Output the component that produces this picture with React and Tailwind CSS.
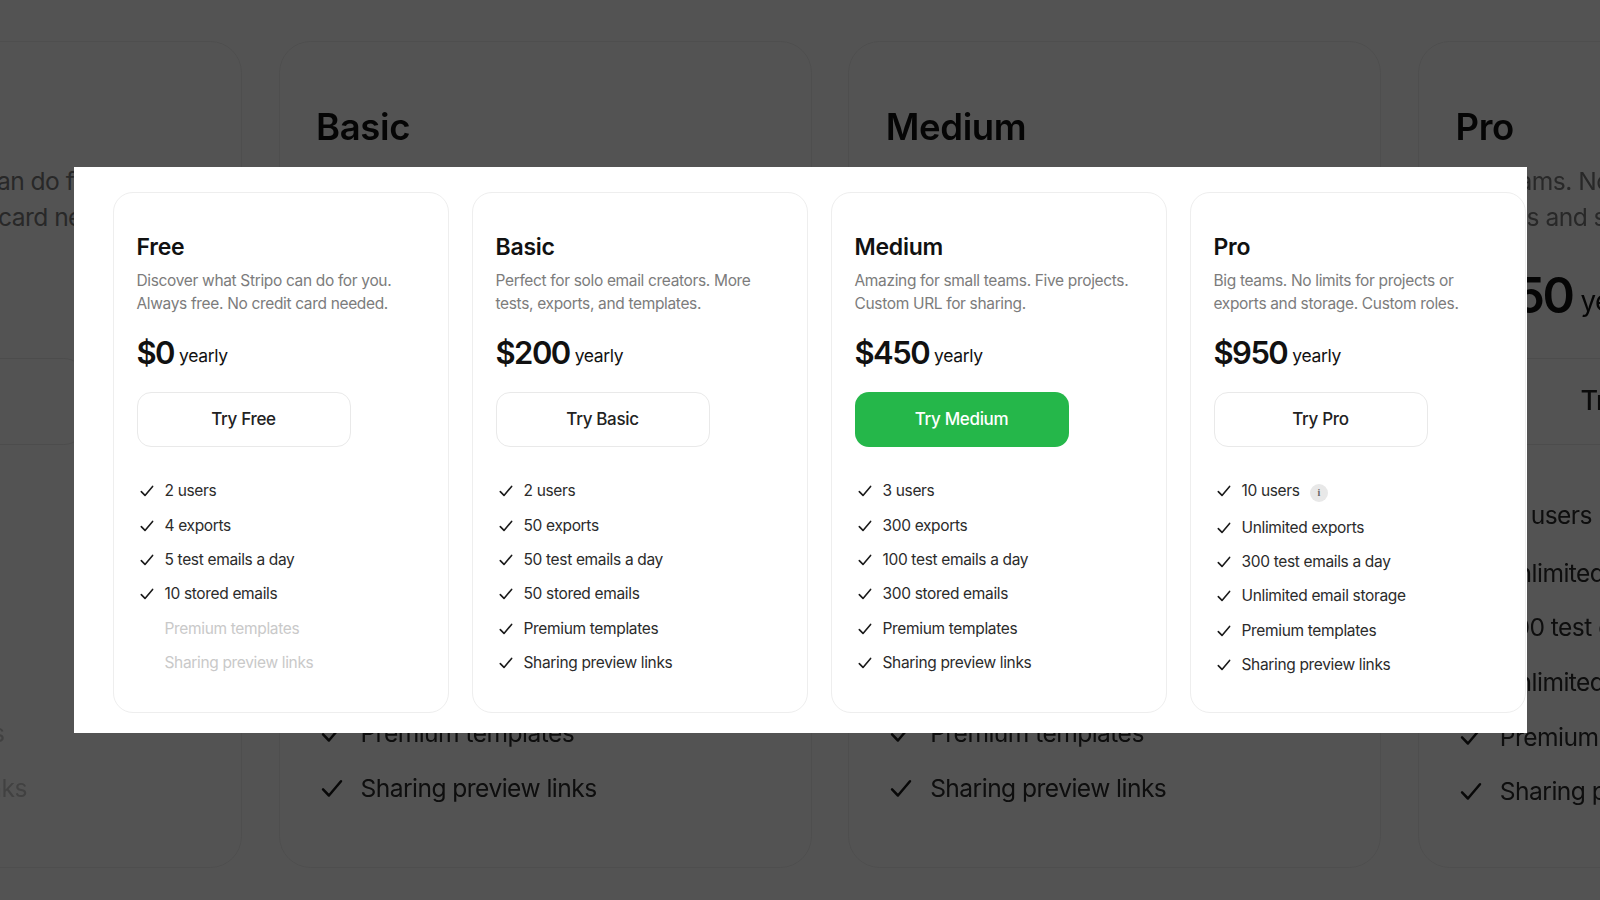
import React from "react";

const plans = [
  {
    name: "Free",
    desc: ["Discover what Stripo can do for you.", "Always free. No credit card needed."],
    price: "$0",
    features: ["2 users", "4 exports", "5 test emails a day", "10 stored emails"],
    off: ["Premium templates", "Sharing preview links"],
  },
  {
    name: "Basic",
    desc: ["Perfect for solo email creators. More", "tests, exports, and templates."],
    price: "$200",
    features: ["2 users", "50 exports", "50 test emails a day", "50 stored emails", "Premium templates", "Sharing preview links"],
  },
  {
    name: "Medium",
    desc: ["Amazing for small teams. Five projects.", "Custom URL for sharing."],
    price: "$450",
    primary: true,
    features: ["3 users", "300 exports", "100 test emails a day", "300 stored emails", "Premium templates", "Sharing preview links"],
  },
  {
    name: "Pro",
    desc: ["Big teams. No limits for projects or", "exports and storage. Custom roles."],
    price: "$950",
    info: true,
    features: ["10 users", "Unlimited exports", "300 test emails a day", "Unlimited email storage", "Premium templates", "Sharing preview links"],
  },
];

function CheckIcon() {
  return (
    <svg viewBox="0 0 14 12" className="w-[14px] h-3 shrink-0 mt-[6px]" fill="none" stroke="#1a1a1a" strokeWidth="1.6" strokeLinecap="round" strokeLinejoin="round">
      <path d="M1.3 6.6 L5 10.4 L12.6 1.4" />
    </svg>
  );
}

function PlanCard({ plan }) {
  return (
    <div className="w-[336px] h-[521px] shrink-0 rounded-[20px] border border-[#eeeeee] bg-white pl-[23px] pt-[39px]">
      <h3 className="text-[23px] leading-[30px] font-semibold tracking-[-0.01em] text-[#111111]">{plan.name}</h3>
      <p className="mt-[7px] text-[15.5px] leading-[23px] tracking-[-0.022em] text-[#7c7c7c]">
        {plan.desc[0]}
        <br />
        {plan.desc[1]}
      </p>
      <div className="mt-[18px] flex items-center gap-[5px] h-10 leading-10 text-[#111111]">
        <span className="text-[31px] font-semibold tracking-[-0.05em]">{plan.price}</span>
        <span className="mt-[6px] text-[17.5px] leading-6 tracking-[-0.02em]">yearly</span>
      </div>
      <button
        className={`mt-[19px] block w-[214px] h-[55px] rounded-[14px] text-[17px] font-medium tracking-[-0.02em] ${
          plan.primary ? "bg-[#25b74a] text-white" : "border border-[#e9e9e9] bg-white text-[#222222]"
        }`}
      >
        Try {plan.name}
      </button>
      <ul className="mt-[27px]">
        {plan.features.map((f, i) => (
          <li key={f} className="flex items-start py-[5.2px] pl-[3px] text-[15.5px] leading-6 tracking-[-0.022em] text-[#2b2b2b]">
            <CheckIcon />
            <span className="ml-[11px]">{f}</span>
            {plan.info && i === 0 && (
              <span className="ml-[10px] mt-[5px] mb-[3px] flex w-[18px] h-[18px] items-center justify-center rounded-full bg-[#e8e8e8] font-['Liberation_Serif',serif] text-[10px] leading-none font-bold text-[#666666]">
                i
              </span>
            )}
          </li>
        ))}
        {plan.off &&
          plan.off.map((f) => (
            <li key={f} className="py-[5.2px] pl-7 text-[15.5px] leading-6 tracking-[-0.022em] text-[#c9c9c9]">
              {f}
            </li>
          ))}
      </ul>
    </div>
  );
}

export default function App() {
  return (
    <div className="relative w-screen h-screen overflow-hidden bg-white font-['Inter',sans-serif]">
      {/* page behind the dialog, same cards but enlarged */}
      <div className="blur-[0.6px]">
        <div className="flex gap-[23px] pt-[25.8px] ml-[-183.5px] [zoom:1.587]">
          {plans.map((p) => (
            <PlanCard key={p.name} plan={p} />
          ))}
        </div>
      </div>

      <div className="absolute inset-0 flex items-center justify-center bg-black/[.675]">
        <div className="w-[1453px] h-[566px] bg-white pl-[39px] pt-[25px] flex gap-[23px]">
          {plans.map((p) => (
            <PlanCard key={p.name} plan={p} />
          ))}
        </div>
      </div>
    </div>
  );
}
